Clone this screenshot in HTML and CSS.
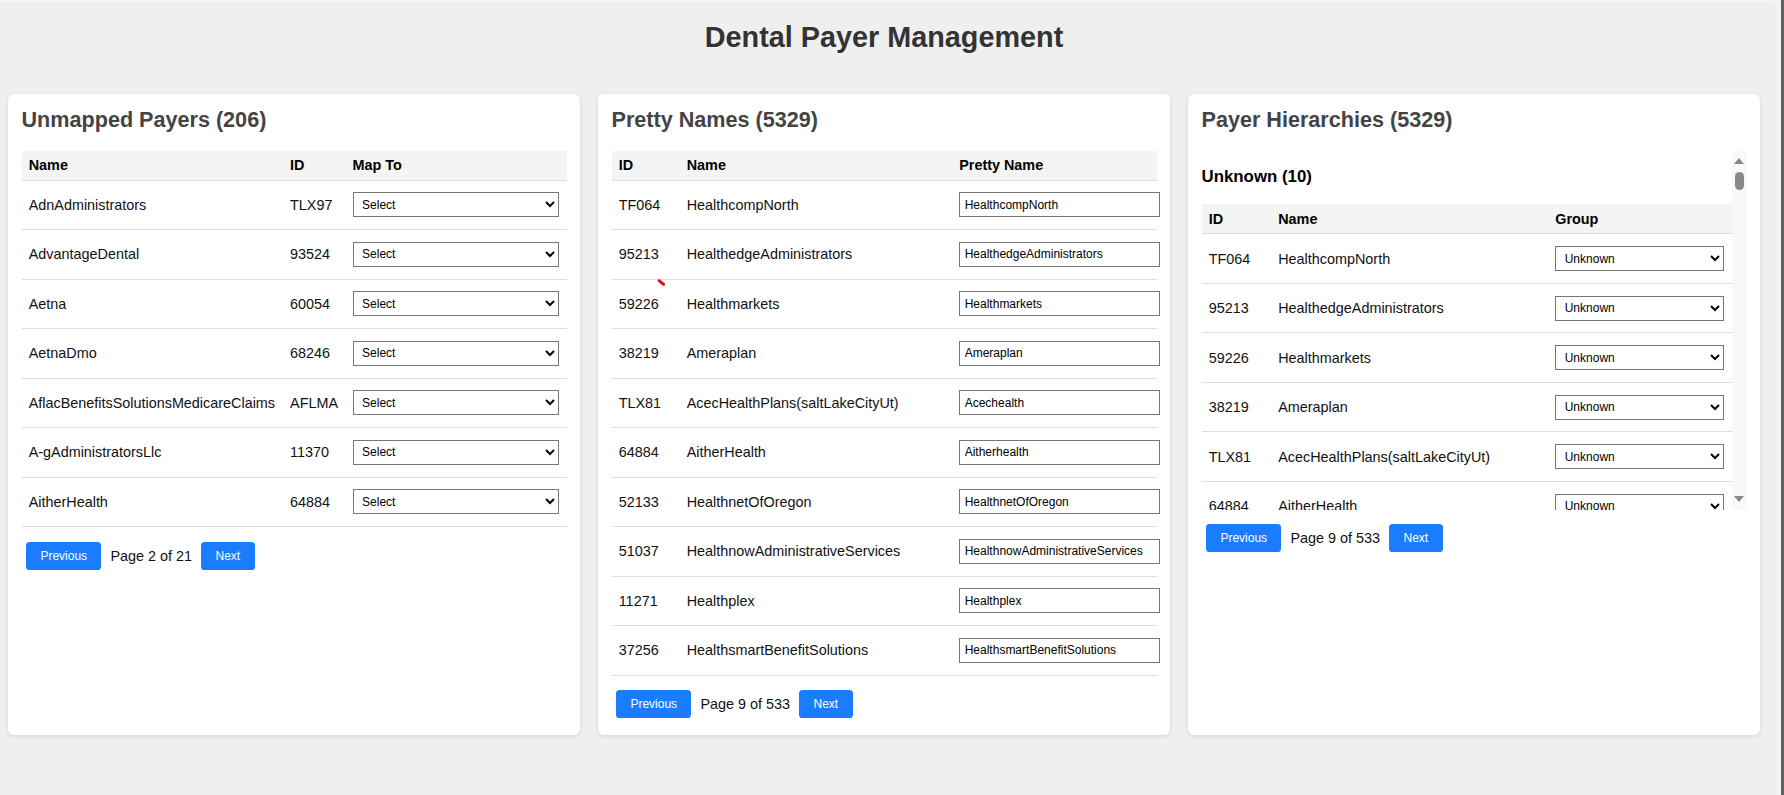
FILE: index.html
```html
<!DOCTYPE html>
<html lang="en">
<head>
<meta charset="utf-8">
<title>Dental Payer Management</title>
<link rel="stylesheet" href="styles.css">
</head>
<body>
<div class="frame">
  <div class="app">
    <h1 class="page-title">Dental Payer Management</h1>
    <div class="panels">
      <section class="card">
        <h2 class="card-title">Unmapped Payers (206)</h2>
        <table class="data-table">
          <colgroup><col class="u-name"><col class="u-id"><col></colgroup>
          <thead><tr><th>Name</th><th>ID</th><th>Map To</th></tr></thead>
          <tbody>
            <tr><td>AdnAdministrators</td><td>TLX97</td><td><select class="field"><option>Select</option></select></td></tr>
            <tr><td>AdvantageDental</td><td>93524</td><td><select class="field"><option>Select</option></select></td></tr>
            <tr><td>Aetna</td><td>60054</td><td><select class="field"><option>Select</option></select></td></tr>
            <tr><td>AetnaDmo</td><td>68246</td><td><select class="field"><option>Select</option></select></td></tr>
            <tr><td>AflacBenefitsSolutionsMedicareClaims</td><td>AFLMA</td><td><select class="field"><option>Select</option></select></td></tr>
            <tr><td>A-gAdministratorsLlc</td><td>11370</td><td><select class="field"><option>Select</option></select></td></tr>
            <tr><td>AitherHealth</td><td>64884</td><td><select class="field"><option>Select</option></select></td></tr>
          </tbody>
        </table>
        <div class="pager"><button class="btn">Previous</button><span class="pager-text">Page 2 of 21</span><button class="btn">Next</button></div>
      </section>

      <section class="card">
        <h2 class="card-title">Pretty Names (5329)</h2>
        <table class="data-table">
          <colgroup><col class="p-id"><col class="p-name"><col></colgroup>
          <thead><tr><th>ID</th><th>Name</th><th>Pretty Name</th></tr></thead>
          <tbody>
            <tr><td>TF064</td><td>HealthcompNorth</td><td><input class="text-field" type="text" value="HealthcompNorth"></td></tr>
            <tr><td>95213</td><td>HealthedgeAdministrators</td><td><input class="text-field" type="text" value="HealthedgeAdministrators"></td></tr>
            <tr><td>59226</td><td>Healthmarkets</td><td><input class="text-field" type="text" value="Healthmarkets"></td></tr>
            <tr><td>38219</td><td>Ameraplan</td><td><input class="text-field" type="text" value="Ameraplan"></td></tr>
            <tr><td>TLX81</td><td>AcecHealthPlans(saltLakeCityUt)</td><td><input class="text-field" type="text" value="Acechealth"></td></tr>
            <tr><td>64884</td><td>AitherHealth</td><td><input class="text-field" type="text" value="Aitherhealth"></td></tr>
            <tr><td>52133</td><td>HealthnetOfOregon</td><td><input class="text-field" type="text" value="HealthnetOfOregon"></td></tr>
            <tr><td>51037</td><td>HealthnowAdministrativeServices</td><td><input class="text-field" type="text" value="HealthnowAdministrativeServices"></td></tr>
            <tr><td>11271</td><td>Healthplex</td><td><input class="text-field" type="text" value="Healthplex"></td></tr>
            <tr><td>37256</td><td>HealthsmartBenefitSolutions</td><td><input class="text-field" type="text" value="HealthsmartBenefitSolutions"></td></tr>
          </tbody>
        </table>
        <div class="pager"><button class="btn">Previous</button><span class="pager-text">Page 9 of 533</span><button class="btn">Next</button></div>
        <span class="pen-mark"></span>
      </section>

      <section class="card">
        <h2 class="card-title">Payer Hierarchies (5329)</h2>
        <div class="scroll-box">
          <div class="scroll-area">
            <h3 class="group-title">Unknown (10)</h3>
            <table class="data-table">
              <colgroup><col class="h-id"><col class="h-name"><col></colgroup>
              <thead><tr><th>ID</th><th>Name</th><th>Group</th></tr></thead>
              <tbody>
                <tr><td>TF064</td><td>HealthcompNorth</td><td><select class="field"><option>Unknown</option></select></td></tr>
                <tr><td>95213</td><td>HealthedgeAdministrators</td><td><select class="field"><option>Unknown</option></select></td></tr>
                <tr><td>59226</td><td>Healthmarkets</td><td><select class="field"><option>Unknown</option></select></td></tr>
                <tr><td>38219</td><td>Ameraplan</td><td><select class="field"><option>Unknown</option></select></td></tr>
                <tr><td>TLX81</td><td>AcecHealthPlans(saltLakeCityUt)</td><td><select class="field"><option>Unknown</option></select></td></tr>
                <tr><td>64884</td><td>AitherHealth</td><td><select class="field"><option>Unknown</option></select></td></tr>
                <tr><td>52133</td><td>HealthnetOfOregon</td><td><select class="field"><option>Unknown</option></select></td></tr>
                <tr><td>51037</td><td>HealthnowAdministrativeServices</td><td><select class="field"><option>Unknown</option></select></td></tr>
                <tr><td>11271</td><td>Healthplex</td><td><select class="field"><option>Unknown</option></select></td></tr>
                <tr><td>37256</td><td>HealthsmartBenefitSolutions</td><td><select class="field"><option>Unknown</option></select></td></tr>
              </tbody>
            </table>
          </div>
          <div class="scrollbar" aria-hidden="true">
            <span class="sb-up"></span>
            <span class="sb-thumb"></span>
            <span class="sb-down"></span>
          </div>
        </div>
        <div class="pager"><button class="btn">Previous</button><span class="pager-text">Page 9 of 533</span><button class="btn">Next</button></div>
      </section>
    </div>
  </div>
  <div class="edge"></div>
</div>
</body>
</html>
```

FILE: styles.css
```css
html, body {
  margin: 0;
  padding: 0;
}

body {
  font-family: "Liberation Sans", Arial, sans-serif;
  font-size: 14.4px;
  color: #111;
  background: #f6f6f6;
}

.frame {
  display: flex;
  height: 795px;
  overflow: hidden;
}

.app {
  width: 1777px;
  flex: none;
  margin-top: 2px;
  padding: 0 17px 0 8px;
  box-sizing: border-box;
  background: #efefef;
  border-top-right-radius: 6px;
}

.edge {
  flex: 1;
  background: linear-gradient(90deg, #f3f3f3 0 4px, #5f5f5f 4px);
}

.page-title {
  margin: 19.3px 0 39.5px;
  font-size: 28.8px;
  line-height: normal;
  text-align: center;
  color: #333;
}

.panels {
  display: grid;
  grid-template-columns: repeat(3, 572px);
  gap: 18px;
}

.card {
  position: relative;
  background: #fff;
  border-radius: 6px;
  box-shadow: 0 1px 4px rgba(0, 0, 0, 0.12);
  padding: 13.5px;
}

.card-title {
  margin: 0 0 17.3px;
  font-size: 21.6px;
  line-height: normal;
  color: #444;
}

.data-table {
  width: 100%;
  border-collapse: collapse;
  table-layout: fixed;
}

.data-table th,
.data-table td {
  text-align: left;
  padding: 6.5px 7.2px;
  border-bottom: 1px solid #ddd;
  white-space: nowrap;
}

.data-table th {
  background: #f4f4f4;
  font-weight: bold;
  color: #000;
}

.data-table td {
  padding-top: 11.75px;
  padding-bottom: 11.75px;
}

.u-name { width: 261.4px; }
.u-id { width: 62.5px; }
.p-id { width: 68px; }
.p-name { width: 272.5px; }
.h-id { width: 69.5px; }
.h-name { width: 277px; }

.field {
  display: block;
  width: 100%;
  box-sizing: border-box;
  height: 25px;
  padding: 0 4.5px;
  font-family: "Liberation Sans", Arial, sans-serif;
  font-size: 12px;
  color: #000;
  background: #fff;
  border: 1px solid #767676;
  border-radius: 0;
}

.text-field {
  display: block;
  width: 100%;
  box-sizing: content-box;
  height: 14px;
  padding: 4.5px;
  font-family: "Liberation Sans", Arial, sans-serif;
  font-size: 12px;
  color: #000;
  background: #fff;
  border: 1px solid #767676;
  border-radius: 0;
  margin: 0;
}

.pager {
  display: flex;
  align-items: center;
  gap: 9px;
  margin-top: 14.5px;
  margin-bottom: 3.5px;
  padding-left: 4.5px;
}

.btn {
  font-family: "Liberation Sans", Arial, sans-serif;
  font-size: 12px;
  line-height: 14px;
  padding: 7.2px 14.4px;
  color: #fff;
  background: #1a7dff;
  border: none;
  border-radius: 3.6px;
}

.pager-text {
  font-size: 14.4px;
  color: #111;
}

.scroll-box {
  display: flex;
  height: 359px;
}

.scroll-area {
  flex: 1;
  min-width: 0;
  overflow: hidden;
}

.group-title {
  margin: 16.85px 0;
  font-size: 16.85px;
  line-height: normal;
  color: #000;
}

.scrollbar {
  flex: none;
  width: 15px;
  display: flex;
  flex-direction: column;
  align-items: center;
  background: #f8f8f8;
}

.sb-up {
  margin-top: 7.5px;
  width: 0;
  height: 0;
  border-left: 5px solid transparent;
  border-right: 5px solid transparent;
  border-bottom: 6.5px solid #888;
}

.sb-thumb {
  margin-top: 8px;
  width: 9px;
  height: 18px;
  border-radius: 4.5px;
  background: #888;
}

.sb-down {
  margin-top: auto;
  margin-bottom: 7.5px;
  width: 0;
  height: 0;
  border-left: 5px solid transparent;
  border-right: 5px solid transparent;
  border-top: 6.5px solid #888;
}

.pen-mark {
  position: absolute;
  left: 59px;
  top: 187px;
  width: 9px;
  height: 2.6px;
  border-radius: 2px;
  background: #e01020;
  transform: rotate(40deg);
}
```
